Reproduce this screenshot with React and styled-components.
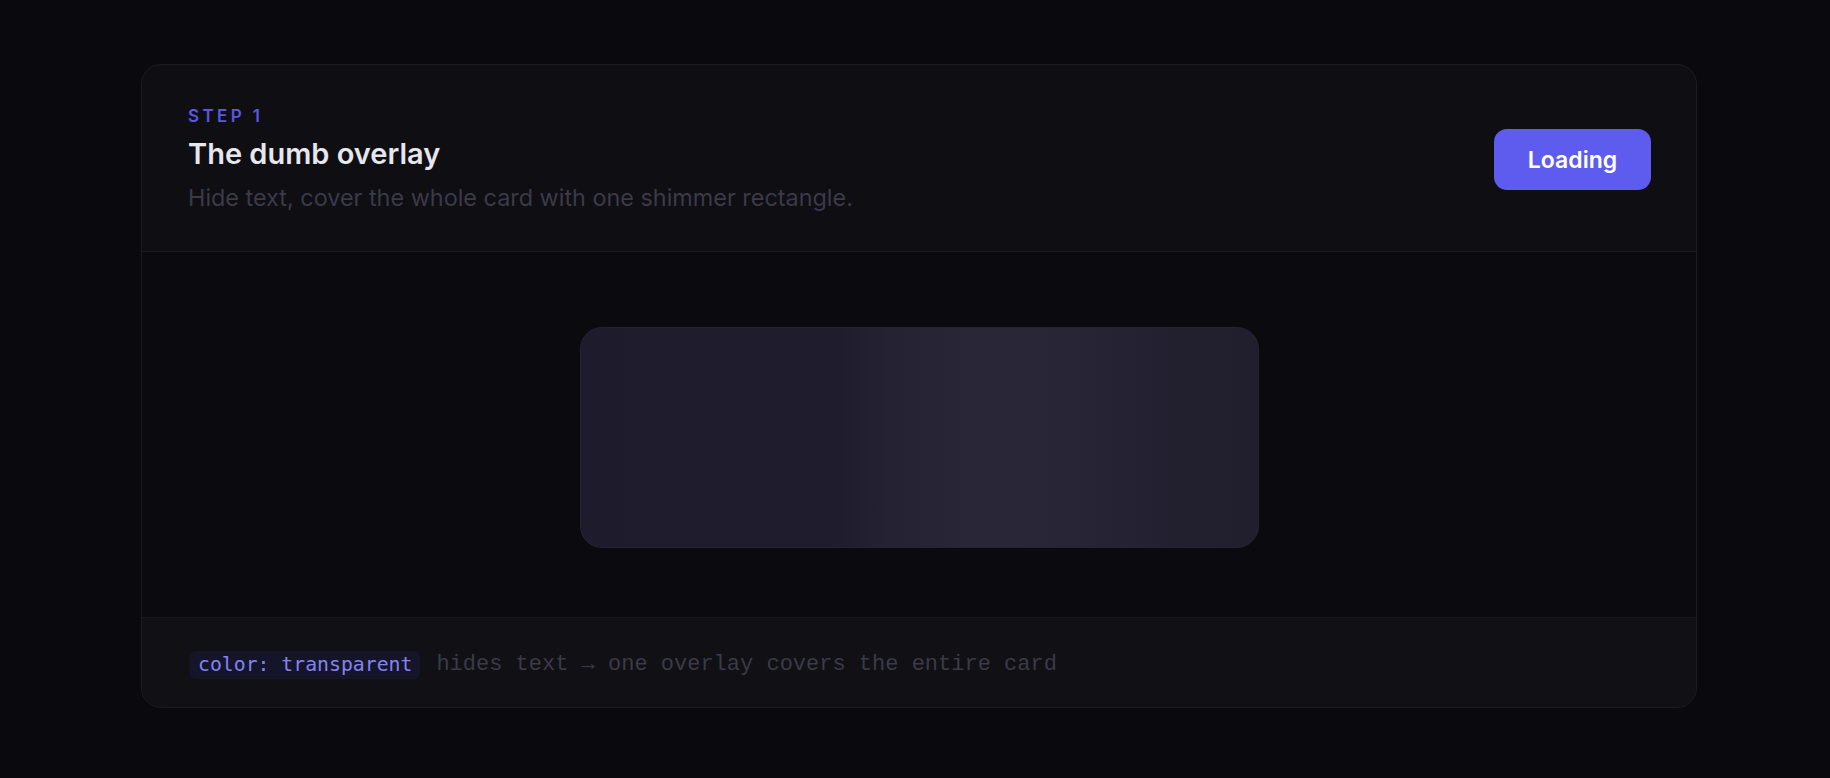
import React from "react";
import styled, { createGlobalStyle } from "styled-components";

const GlobalStyle = createGlobalStyle`
  * {
    box-sizing: border-box;
  }
  html,
  body {
    margin: 0;
    background: #0a0a0e;
  }
  body {
    font-family: Inter, "Noto Sans", sans-serif;
    min-height: 778px;
  }
`;

const Page = styled.div`
  display: flex;
  justify-content: center;
  padding: 64px 0 0 8px;
`;

const Card = styled.section`
  width: 1556px;
  height: 644px;
  display: flex;
  flex-direction: column;
  background: #0e0e13;
  border: 1px solid #1c1c25;
  border-radius: 20px;
  overflow: hidden;
`;

const Header = styled.header`
  display: flex;
  align-items: center;
  justify-content: space-between;
  padding: 40px 45px 39px 46px;
  border-bottom: 1px solid #191920;
`;

const Titles = styled.div`
  display: flex;
  flex-direction: column;
`;

const Step = styled.span`
  font-size: 17px;
  line-height: 22px;
  font-weight: 600;
  letter-spacing: 3.4px;
  color: #5a57e0;
`;

const Title = styled.h2`
  margin: 9px 0 0;
  font-size: 29px;
  line-height: 36px;
  font-weight: 600;
  color: #e6e6ec;
`;

const Subtitle = styled.p`
  margin: 12px 0 0;
  font-size: 23.4px;
  line-height: 28px;
  font-weight: 400;
  color: #3b3a48;
`;

const Button = styled.button`
  width: 157px;
  height: 61px;
  margin-top: 2px;
  border: none;
  border-radius: 13px;
  background: #5e5bef;
  color: #ffffff;
  font-family: Inter, sans-serif;
  font-size: 23px;
  font-weight: 600;
  cursor: pointer;
`;

const Preview = styled.div`
  flex: 1;
  display: flex;
  align-items: center;
  justify-content: center;
  padding-top: 6px;
  background: #0b0b0f;
`;

const Shimmer = styled.div`
  width: 679px;
  height: 221px;
  border-radius: 22px;
  border: 1px solid #25232f;
  background: linear-gradient(
    90deg,
    #1e1c2c 0%,
    #1f1d2d 38%,
    #242233 46%,
    #292737 58%,
    #282636 72%,
    #22202f 88%,
    #211f2e 100%
  );
`;

const Footer = styled.footer`
  height: 90px;
  display: flex;
  align-items: center;
  gap: 16px;
  padding: 4px 48px 0;
  background: #101015;
  border-top: 1px solid #18181f;
`;

const Code = styled.code`
  padding: 2px 8px 3px;
  border-radius: 6px;
  background: #15152a;
  color: #8383f0;
  font-family: "DejaVu Sans Mono", monospace;
  font-size: 19.8px;
  line-height: 23px;
`;

const Note = styled.span`
  font-family: "Liberation Mono", monospace;
  font-size: 22px;
  line-height: 23px;
  color: #3b3a47;
`;

export default function App() {
  return (
    <>
      <GlobalStyle />
      <Page>
        <Card>
          <Header>
            <Titles>
              <Step>STEP 1</Step>
              <Title>The dumb overlay</Title>
              <Subtitle>
                Hide text, cover the whole card with one shimmer rectangle.
              </Subtitle>
            </Titles>
            <Button>Loading</Button>
          </Header>
          <Preview>
            <Shimmer />
          </Preview>
          <Footer>
            <Code>color: transparent</Code>
            <Note>hides text → one overlay covers the entire card</Note>
          </Footer>
        </Card>
      </Page>
    </>
  );
}
